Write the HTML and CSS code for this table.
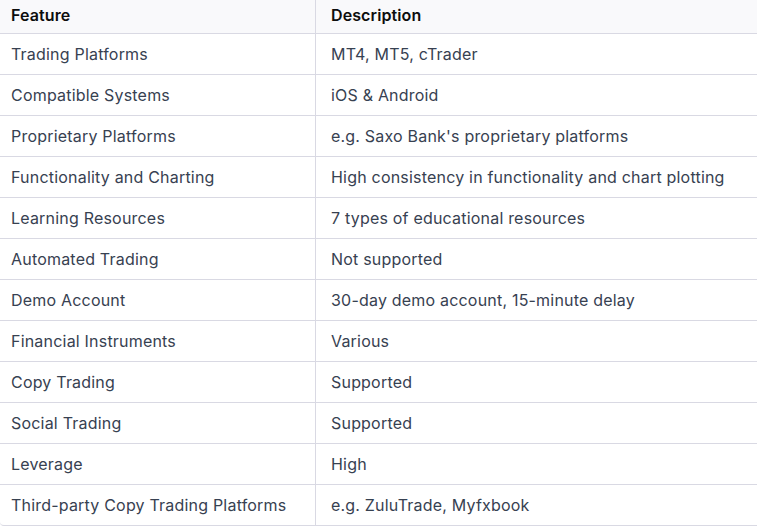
FILE: index.html
```html
<!DOCTYPE html>
<html lang="en">

<head>
    <meta charset="utf-8">
    <title>Features</title>
    <link rel="stylesheet" href="styles.css">
</head>

<body>
    <div class="table-wrap">
        <table class="features">
            <thead>
                <tr>
                    <th>Feature</th>
                    <th>Description</th>
                </tr>
            </thead>
            <tbody>
                <tr><td>Trading Platforms</td><td>MT4, MT5, cTrader</td></tr>
                <tr><td>Compatible Systems</td><td>iOS &amp; Android</td></tr>
                <tr><td>Proprietary Platforms</td><td>e.g. Saxo Bank's proprietary platforms</td></tr>
                <tr><td>Functionality and Charting</td><td>High consistency in functionality and chart plotting</td></tr>
                <tr><td>Learning Resources</td><td>7 types of educational resources</td></tr>
                <tr><td>Automated Trading</td><td>Not supported</td></tr>
                <tr><td>Demo Account</td><td>30-day demo account, 15-minute delay</td></tr>
                <tr><td>Financial Instruments</td><td>Various</td></tr>
                <tr><td>Copy Trading</td><td>Supported</td></tr>
                <tr><td>Social Trading</td><td>Supported</td></tr>
                <tr><td>Leverage</td><td>High</td></tr>
                <tr><td>Third-party Copy Trading Platforms</td><td>e.g. ZuluTrade, Myfxbook</td></tr>
            </tbody>
        </table>
    </div>
</body>
</html>
```

FILE: styles.css
```css
body {
    margin: 0;
    background-color: #fff;
    font-family: Inter, "Noto Sans", sans-serif;
}

.table-wrap {
    width: 757px;
    border-bottom: 1px solid #d9d9e3;
    border-bottom-left-radius: 4px;
    overflow: hidden;
}

.features {
    width: 100%;
    border-collapse: collapse;
    font-size: 16px;
    letter-spacing: 0.2px;
    color: #374151;
}

.features th,
.features td {
    text-align: left;
    padding: 0 15px;
    border-top: 1px solid #d9d9e3;
}

.features th:first-child,
.features td:first-child {
    width: 289px;
    padding-left: 11px;
    border-right: 1px solid #d9d9e3;
}

.features thead th {
    height: 29px;
    padding-bottom: 4px;
    border-top: none;
    background-color: #f9f9fb;
    color: #0d0d0d;
    font-weight: 600;
    letter-spacing: 0.1px;
    vertical-align: middle;
}

.features tbody td {
    height: 40px;
}
```
